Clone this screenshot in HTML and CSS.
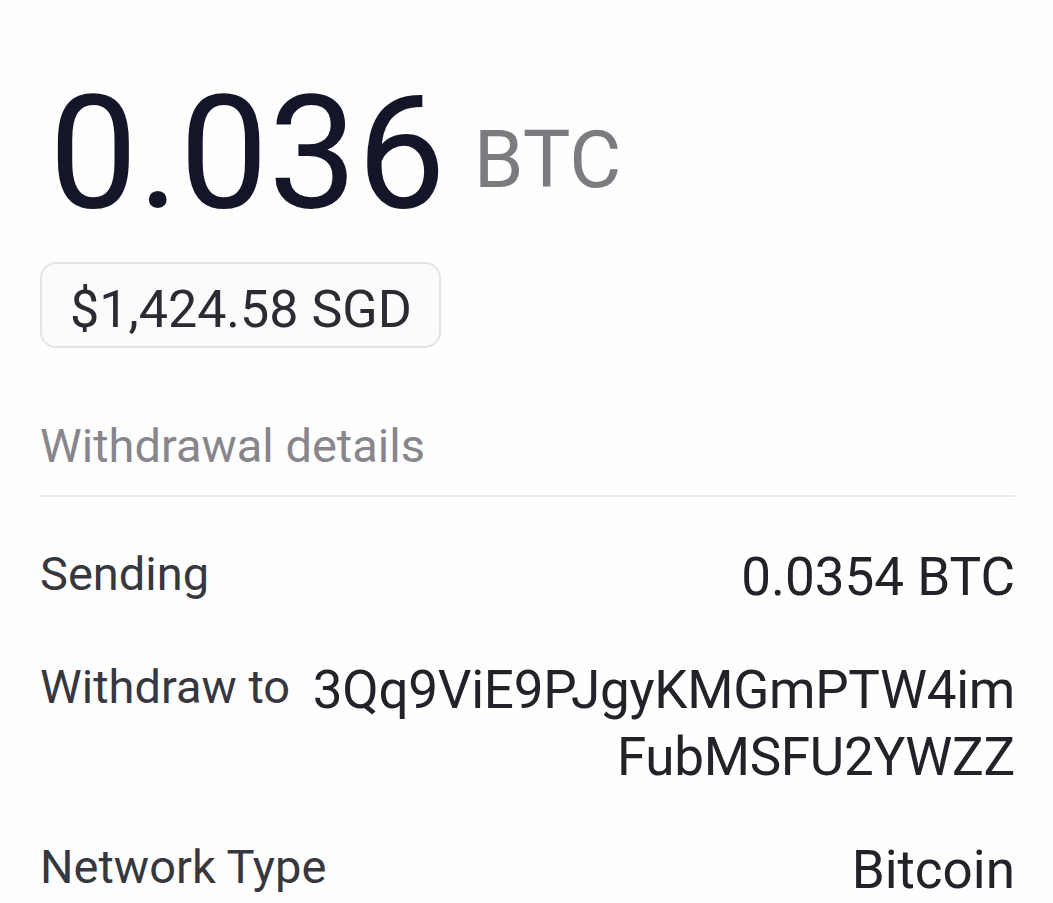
FILE: index.html
```html
<!DOCTYPE html>
<html>
    <head>
        <meta charset="utf-8">
        <title>Withdrawal</title>
        <link rel="stylesheet" href="styles.css">
    </head>
    <body>
    <div id="wrapper">
        <div class="amount">
            <span class="amount-value">0.036</span><span class="amount-unit">BTC</span>
        </div>
        <div class="fiat">$1,424.58 SGD</div>

        <div class="section-title">Withdrawal details</div>

        <div class="details">
            <div class="row">
                <div class="label">Sending</div>
                <div class="value">0.0354 BTC</div>
            </div>
            <div class="row">
                <div class="label">Withdraw to</div>
                <div class="value address">3Qq9ViE9PJgyKMGmPTW4imFubMSFU2YWZZ</div>
            </div>
            <div class="row">
                <div class="label">Network Type</div>
                <div class="value">Bitcoin</div>
            </div>
        </div>
    </div>
    </body>
</html>
```

FILE: styles.css
```css
body{
    margin: 0;
    background: #fefefe;
    font-family: Roboto, "Noto Sans", sans-serif;
}
#wrapper{
    padding: 74px 38px 0 40px;
}

/* big balance */
.amount{
    font-size: 158px;
    line-height: 1;
    color: #15152a;
    white-space: nowrap;
}
.amount-value{
    margin-left: 9px;
}
.amount-unit{
    font-size: 80px;
    color: #7c7c80;
    margin-left: 28px;
    vertical-align: 20px;
}

.fiat{
    display: inline-block;
    margin-top: 30px;
    padding: 15px 27px 5px 28px;
    font-size: 52px;
    line-height: 62px;
    color: #2b2b33;
    background: #fbfbfc;
    border: 2px solid #e4e4e7;
    border-radius: 16px;
}

.section-title{
    margin-top: 70px;
    font-size: 47px;
    color: #86868c;
    padding-bottom: 22px;
    border-bottom: 2px solid #ebebed;
}

/* detail rows */
.details{
    display: flex;
    flex-direction: column;
    gap: 46px;
    padding-top: 47px;
}
.row{
    display: flex;
    justify-content: space-between;
    align-items: flex-start;
    gap: 10px;
}
.label{
    font-size: 47px;
    line-height: 60px;
    color: #37373f;
    white-space: nowrap;
}
.value{
    font-size: 53px;
    line-height: 67px;
    color: #222228;
    text-align: right;
}
.address{
    letter-spacing: -0.3px;
    word-break: break-all;
}
```
